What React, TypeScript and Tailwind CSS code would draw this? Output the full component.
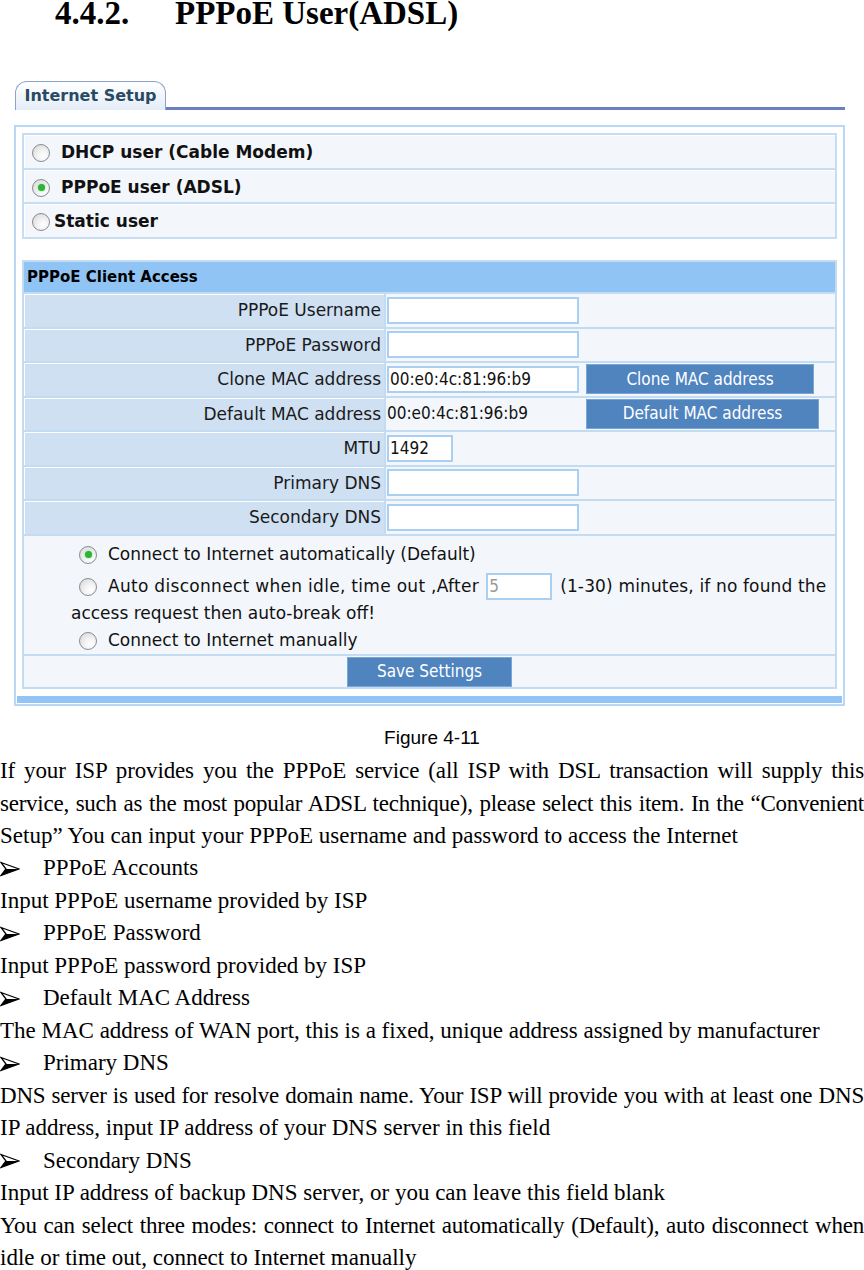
import React from "react";

const ui = "font-['DejaVu_Sans',sans-serif]";
const cond = "font-['DejaVu_Sans_Condensed','DejaVu_Sans',sans-serif] font-stretch-condensed";

function Radio({ checked = false }: { checked?: boolean }) {
  return (
    <span className="inline-flex w-[18px] h-[18px] shrink-0 items-center justify-center rounded-full border border-[#858d96] bg-[radial-gradient(circle_at_65%_70%,#ffffff_0%,#f4f4f4_35%,#d4d4d4_100%)] align-middle">
      {checked && <span className="w-[7px] h-[7px] rounded-full bg-[#2db23a] shadow-[0_0_2px_#66dd55]" />}
    </span>
  );
}

function TextInput({ w = "w-[192px]", value = "", gray = false, extra = "" }: { w?: string; value?: string; gray?: boolean; extra?: string }) {
  return (
    <span className={`${cond} inline-flex ${w} ${extra} h-[27px] items-center border-2 border-[#a9d0f2] bg-white px-[1px] text-[17px] leading-none align-middle ${gray ? "text-[#9a9a9a]" : "text-[#111]"}`}>
      {value}
    </span>
  );
}

function Btn({ w, children }: { w: string; children: React.ReactNode }) {
  return (
    <span className={`${cond} inline-flex ${w} h-[30px] items-center justify-center border border-[#7aa6d6] bg-[#4f84bf] text-[17px] text-white`}>
      {children}
    </span>
  );
}

function FormRow({ label, children }: { label: string; children?: React.ReactNode }) {
  return (
    <div className="flex h-[34.5px] border-t-2 border-[#c4dcf2]">
      <div className="flex w-[364px] items-center justify-end border-x-2 border-[#c4dcf2] bg-[#cfe0f2] pr-[3px] pt-[1px] text-[17px] text-[#1a1a1a] shadow-[inset_1px_1px_0_#ffffff]">
        {label}
      </div>
      <div className="flex flex-1 items-center gap-[7px] border-r-2 border-[#c4dcf2] bg-[#f3f7fc] pl-[1px]">{children}</div>
    </div>
  );
}

function TopRow({ checked, label, gap }: { checked?: boolean; label: string; gap: string }) {
  return (
    <div className={`flex h-[34.7px] items-center ${gap} border-x-2 border-t-2 border-[#c6ddf3] bg-[#f3f7fc] pl-[8px] pt-[3px] text-[17px] font-bold text-[#111] shadow-[inset_1px_1px_0_#ffffff]`}>
      <Radio checked={checked} />
      <span>{label}</span>
    </div>
  );
}

const Line = ({ children, justify = false, tight = "" }: { children: React.ReactNode; justify?: boolean; tight?: string }) => (
  <div className={`h-[32.47px] leading-[32.47px] ${tight} ${justify ? "text-justify [text-align-last:justify]" : ""}`}>{children}</div>
);

const Arrow = () => (
  <svg width="20" height="16" viewBox="0 0 20 16" className="shrink-0">
    <polygon points="1,1.5 19,8 1,14.5 6,8" fill="white" stroke="black" strokeWidth="1.3" strokeLinejoin="miter" />
    <polygon points="6,8 19,8 1,14.5" fill="black" />
  </svg>
);

const Bullet = ({ children }: { children: React.ReactNode }) => (
  <div className="flex h-[32.47px] items-center leading-[32.47px]">
    <span className="flex w-[43px] items-center">
      <Arrow />
    </span>
    <span>{children}</span>
  </div>
);

export default function App() {
  return (
    <div className="w-[864px] bg-white text-black">
      <h1 className="-mt-[3px] pl-[55px] font-['Liberation_Serif',serif] text-[33px] font-bold leading-[33px]">
        <span className="inline-block w-[120px]">4.4.2.</span>
        <span>PPPoE User(ADSL)</span>
      </h1>

      <div className={`${ui} mt-[51px]`}>
        <div className="ml-[15px] mr-[19px] flex items-end">
          <div className="flex h-[29px] w-[151px] items-center justify-center rounded-t-[12px] border-x-[1.5px] border-t-[1.5px] border-[#8ba3c9] bg-gradient-to-b from-white to-[#e4edf8] text-[16px] font-bold text-[#2a4a63]">
            Internet Setup
          </div>
          <div className="h-[3px] flex-1 bg-[#6a80c2]" />
        </div>

        <div className="ml-[14px] mt-[15px] w-[831px] border-2 border-[#b8d8f6] bg-white px-[6px] pt-[6px] pb-[1px]">
          <div className="border-b-2 border-[#c6ddf3]">
            <TopRow label="DHCP user (Cable Modem)" gap="gap-[11px]" />
            <TopRow checked label="PPPoE user (ADSL)" gap="gap-[11px]" />
            <TopRow label="Static user" gap="gap-[4px]" />
          </div>

          <div className="mt-[21px] flex h-[32px] items-center border-x-2 border-t-2 border-[#c4dcf2] bg-[#90c4f4] pl-[3px] text-[15px] font-bold text-black">
            PPPoE Client Access
          </div>
          <FormRow label="PPPoE Username">
            <TextInput />
          </FormRow>
          <FormRow label="PPPoE Password">
            <TextInput />
          </FormRow>
          <FormRow label="Clone MAC address">
            <TextInput value="00:e0:4c:81:96:b9" />
            <Btn w="w-[228px]">Clone MAC address</Btn>
          </FormRow>
          <FormRow label="Default MAC address">
            <span className={`${cond} inline-block w-[192px] text-[17px] text-[#111]`}>00:e0:4c:81:96:b9</span>
            <Btn w="w-[233px]">Default MAC address</Btn>
          </FormRow>
          <FormRow label="MTU">
            <TextInput w="w-[66px]" value="1492" />
          </FormRow>
          <FormRow label="Primary DNS">
            <TextInput />
          </FormRow>
          <FormRow label="Secondary DNS">
            <TextInput />
          </FormRow>

          <div className="h-[120px] border-x-2 border-t-2 border-[#c4dcf2] bg-[#f3f7fc] pl-[47px] pt-[5px] text-[17px] text-[#111]">
            <div className="flex h-[28px] items-center gap-[11px] pl-[8px]">
              <Radio checked />
              <span>Connect to Internet automatically (Default)</span>
            </div>
            <div className="mt-[4px] whitespace-nowrap leading-[27px]">
              <span className="pl-[8px]">
                <Radio />
              </span>
              <span className="ml-[11px] tracking-[0.3px]">Auto disconnect when idle, time out ,After</span>
              <TextInput w="w-[66px]" value="5" gray extra="ml-[7px]" />
              <span className="ml-[8px] tracking-[0.15px]">(1-30) minutes, if no found the</span>
              <br />
              <span>access request then auto-break off!</span>
            </div>
            <div className="flex h-[28px] items-center gap-[11px] pl-[8px]">
              <Radio />
              <span>Connect to Internet manually</span>
            </div>
          </div>
          <div className="flex h-[35px] items-center justify-center border-2 border-[#c4dcf2] bg-[#f3f7fc] pt-[2px]">
            <Btn w="w-[165px]">Save Settings</Btn>
          </div>

          <div className="-mx-[5px] mt-[7px] h-[7px] bg-[#92c5f5]" />
        </div>
      </div>

      <div className="mt-[16px] text-center font-['Liberation_Sans',sans-serif] text-[19px] leading-[31.5px]">Figure 4-11</div>

      <div className="mt-[2px] font-['Liberation_Serif',serif] text-[23px]">
        <Line justify tight="tracking-[-0.15px]">If your ISP provides you the PPPoE service (all ISP with DSL transaction will supply this</Line>
        <Line justify tight="tracking-[-0.25px]">service, such as the most popular ADSL technique), please select this item. In the “Convenient</Line>
        <Line>Setup” You can input your PPPoE username and password to access the Internet</Line>
        <Bullet>PPPoE Accounts</Bullet>
        <Line>Input PPPoE username provided by ISP</Line>
        <Bullet>PPPoE Password</Bullet>
        <Line>Input PPPoE password provided by ISP</Line>
        <Bullet>Default MAC Address</Bullet>
        <Line>The MAC address of WAN port, this is a fixed, unique address assigned by manufacturer</Line>
        <Bullet>Primary DNS</Bullet>
        <Line justify tight="tracking-[-0.2px]">DNS server is used for resolve domain name. Your ISP will provide you with at least one DNS</Line>
        <Line>IP address, input IP address of your DNS server in this field</Line>
        <Bullet>Secondary DNS</Bullet>
        <Line>Input IP address of backup DNS server, or you can leave this field blank</Line>
        <Line justify tight="tracking-[-0.2px]">You can select three modes: connect to Internet automatically (Default), auto disconnect when</Line>
        <Line>idle or time out, connect to Internet manually</Line>
      </div>
    </div>
  );
}
